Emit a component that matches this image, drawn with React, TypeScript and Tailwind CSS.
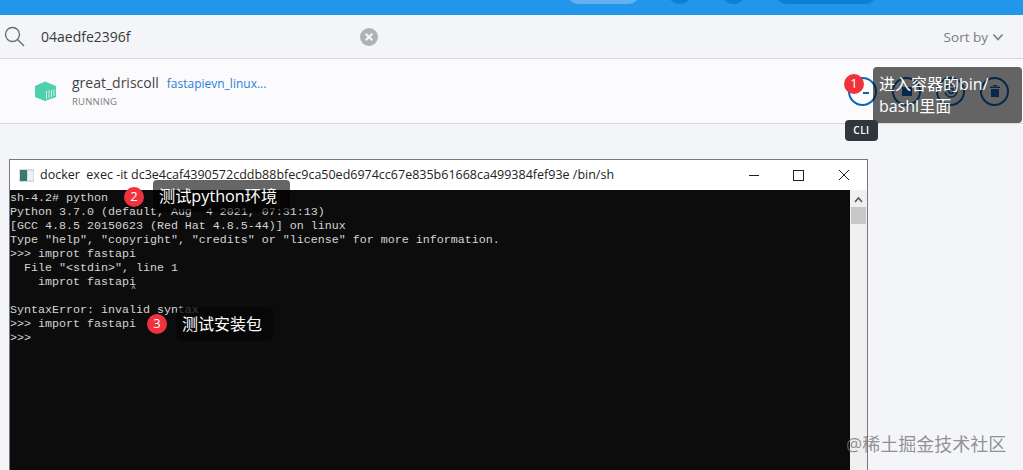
import React from "react";

const lines = [
  "sh-4.2# python",
  "Python 3.7.0 (default, Aug  4 2021, 07:31:13)",
  "[GCC 4.8.5 20150623 (Red Hat 4.8.5-44)] on linux",
  'Type "help", "copyright", "credits" or "license" for more information.',
  ">>> improt fastapi",
  '  File "<stdin>", line 1',
  "    improt fastapi",
  "",
  "SyntaxError: invalid syntax",
  ">>> import fastapi",
  ">>>",
];

function Badge({ n, className }: { n: number; className: string }) {
  return (
    <div className={`absolute flex h-5 w-5 items-center justify-center rounded-full bg-[#f0323c] text-[13px] text-white ${className}`}>
      {n}
    </div>
  );
}

function RoundAction({ children }: { children: React.ReactNode }) {
  return (
    <div className="flex h-[29px] w-[29px] items-center justify-center rounded-full border-2 border-[#0b66b8] text-[#0b66b8]">
      {children}
    </div>
  );
}

export default function App() {
  return (
    <div
      className="relative h-[470px] w-[1023px] overflow-hidden bg-[#f4f5f8] text-[#333]"
      style={{ fontFamily: '"Open Sans", "Noto Sans CJK SC", sans-serif' }}
    >
      <header className="flex h-[15px] items-start overflow-hidden bg-[#2196ea] pl-[567px]">
        <div className="-mt-[20px] h-[24px] w-[73px] rounded-full bg-[#64b1f1]" />
        <div className="-mt-[21px] ml-[27px] h-[25px] w-[25px] rounded-full bg-[#0f7ed6]" />
        <div className="-mt-[20px] ml-[30px] h-[24px] w-[23px] rounded-full bg-[#0f7ed6]" />
        <div className="-mt-[20px] ml-[30px] h-[24px] w-[102px] rounded-full bg-[#0f7ed6]" />
      </header>

      <div className="flex h-11 items-center border-b border-[#d5d6d9]">
        <svg className="ml-[4px] h-[21px] w-[21px] text-[#6c6e70]" viewBox="0 0 21 21" fill="none" stroke="currentColor" strokeWidth="1.4">
          <circle cx="8.5" cy="8.5" r="7" />
          <path d="M13.5 13.5 L20 20" />
        </svg>
        <span className="ml-[16px] w-[319px] text-[14px] text-[#3a3a3a]">04aedfe2396f</span>
        <svg className="h-[18px] w-[18px]" viewBox="0 0 18 18">
          <circle cx="9" cy="9" r="9" fill="#b0b1b3" />
          <path d="M5.7 5.7 L12.3 12.3 M12.3 5.7 L5.7 12.3" stroke="#f4f5f8" strokeWidth="2.2" />
        </svg>
        <span className="ml-auto pt-px text-[13.5px] text-[#7a7c80]">Sort by</span>
        <svg className="ml-[4px] mr-[19px] h-3 w-3 text-[#7a7c80]" viewBox="0 0 12 12" fill="none" stroke="currentColor" strokeWidth="1.6">
          <path d="M1.5 3.5 L6 8.5 L10.5 3.5" />
        </svg>
      </div>

      <div className="flex h-[65px] items-center border-b border-[#d9dadc] bg-[#fbfbfd]">
        <svg className="ml-[34px] h-[24px] w-[24px]" viewBox="0 0 24 24">
          <path d="M1 7 L11 2.5 L22 7 V18 L11 22 L1 18 Z" fill="#4fd0ac" />
          <path d="M12.5 12 V20 M15 11.5 V19 M17.5 11 V18 M20 10.5 V17" stroke="#d6f4ea" strokeWidth="1" />
        </svg>
        <div className="ml-[14px] flex flex-col pb-[2px]">
          <div className="flex items-baseline">
            <span className="text-[14px] leading-[20px] text-[#444]">great_driscoll</span>
            <span className="ml-[8px] text-[12px] text-[#2c7fd6]">fastapievn_linux...</span>
          </div>
          <span className="mt-[2px] text-[9.5px] leading-[13px] tracking-[0.2px] text-[#7c7c7c]">RUNNING</span>
        </div>
        <div className="ml-auto mr-[14px] flex items-center gap-[15px]">
          <RoundAction>
            <svg className="h-4 w-4" viewBox="0 0 16 16" fill="currentColor"><rect x="8" y="9" width="6" height="2" /></svg>
          </RoundAction>
          <RoundAction>
            <svg className="h-3.5 w-3.5" viewBox="0 0 14 14" fill="currentColor"><rect x="2" y="3" width="10" height="9" /></svg>
          </RoundAction>
          <RoundAction>
            <svg className="h-4 w-4" viewBox="0 0 16 16" fill="none" stroke="currentColor" strokeWidth="1.5"><circle cx="8" cy="8" r="6" /><circle cx="8" cy="8" r="2.5" /></svg>
          </RoundAction>
          <RoundAction>
            <svg className="h-3.5 w-3.5" viewBox="0 0 14 14" fill="currentColor"><path d="M2 2.5 H12 V4 H2 Z M3 5 H11 V13 H3 Z M5 1 H9 V2 H5 Z" /></svg>
          </RoundAction>
        </div>
      </div>

      <div className="ml-[9px] mt-[35px] w-[859px] border border-[#77797c] bg-white">
        <div className="flex h-[30px] items-center">
          <svg className="ml-[9px] h-[15px] w-[15px]" viewBox="0 0 15 15">
            <rect x="0" y="1" width="15" height="13" fill="#d4dcdc" />
            <rect x="1" y="2" width="7" height="11" fill="#3d7772" />
            <rect x="9" y="3" width="5" height="9" fill="#eef1f1" />
          </svg>
          <span className="ml-[6px] whitespace-pre text-[12.5px] text-[#222]">
            docker  exec -it dc3e4caf4390572cddb88bfec9ca50ed6974cc67e835b61668ca499384fef93e /bin/sh
          </span>
          <svg className="ml-auto mr-[33px] h-[12px] w-[12px]" viewBox="0 0 12 12" stroke="#222" strokeWidth="1"><path d="M1 6.5 H11" /></svg>
          <svg className="mr-[34px] h-[11px] w-[11px]" viewBox="0 0 11 11" fill="none" stroke="#222" strokeWidth="1"><rect x="0.5" y="0.5" width="10" height="10" /></svg>
          <svg className="mr-[17px] h-[12px] w-[12px]" viewBox="0 0 12 12" stroke="#222" strokeWidth="1"><path d="M1 1 L11 11 M11 1 L1 11" /></svg>
        </div>
        <div className="flex h-[280px]">
          <pre
            className="min-w-0 flex-1 bg-[#0c0c0c] pt-px text-[11.67px] leading-[14px] text-[#d4d4d4]"
            style={{ fontFamily: '"Liberation Mono", monospace' }}
          >
            {lines.join("\n")}
          </pre>
          <div className="w-[17px] bg-[#f0f0f0]">
            <svg className="mx-auto mt-[6px] h-[8px] w-[9px]" viewBox="0 0 9 8" fill="none" stroke="#555" strokeWidth="1.5"><path d="M1 6 L4.5 2 L8 6" /></svg>
            <div className="mx-auto mt-[3px] h-[17px] w-[15px] bg-[#c8c8c8]" />
          </div>
        </div>
      </div>

      {/* annotation overlays */}
      <div className="absolute left-[873px] top-[67px] h-[56px] w-[149px] rounded bg-black/60 px-[6px] pt-[6px] text-[16px] leading-[22px] text-white">
        进入容器的bin/
        <br />
        bashl里面
      </div>
      <Badge n={1} className="left-[844px] top-[74px]" />
      <div className="absolute left-[845px] top-[120px] flex h-[21px] w-[33px] items-center justify-center rounded bg-[#2f373c] text-[10px] font-semibold tracking-[0.5px] text-white">
        CLI
      </div>
      <div className="absolute left-[153px] top-[180px] flex h-[32px] w-[137px] items-center rounded bg-black/60 pl-[6px] text-[16.2px] text-white">
        测试python环境
      </div>
      <Badge n={2} className="left-[124px] top-[187px]" />
      <div className="absolute left-[176px] top-[307px] flex h-[34px] w-[98px] items-center rounded-lg bg-[#050505]/75 pl-[6px] text-[16px] text-white">
        测试安装包
      </div>
      <Badge n={3} className="left-[147px] top-[314px]" />
      <div
        className="absolute left-[131px] top-[284px] text-[8px] leading-[10px] text-[#d4d4d4]"
        style={{ fontFamily: '"Liberation Mono", monospace' }}
      >
        ^
      </div>
      <div className="absolute left-[846px] top-[431px] text-[18px] text-[#777]/80">@稀土掘金技术社区</div>
    </div>
  );
}
